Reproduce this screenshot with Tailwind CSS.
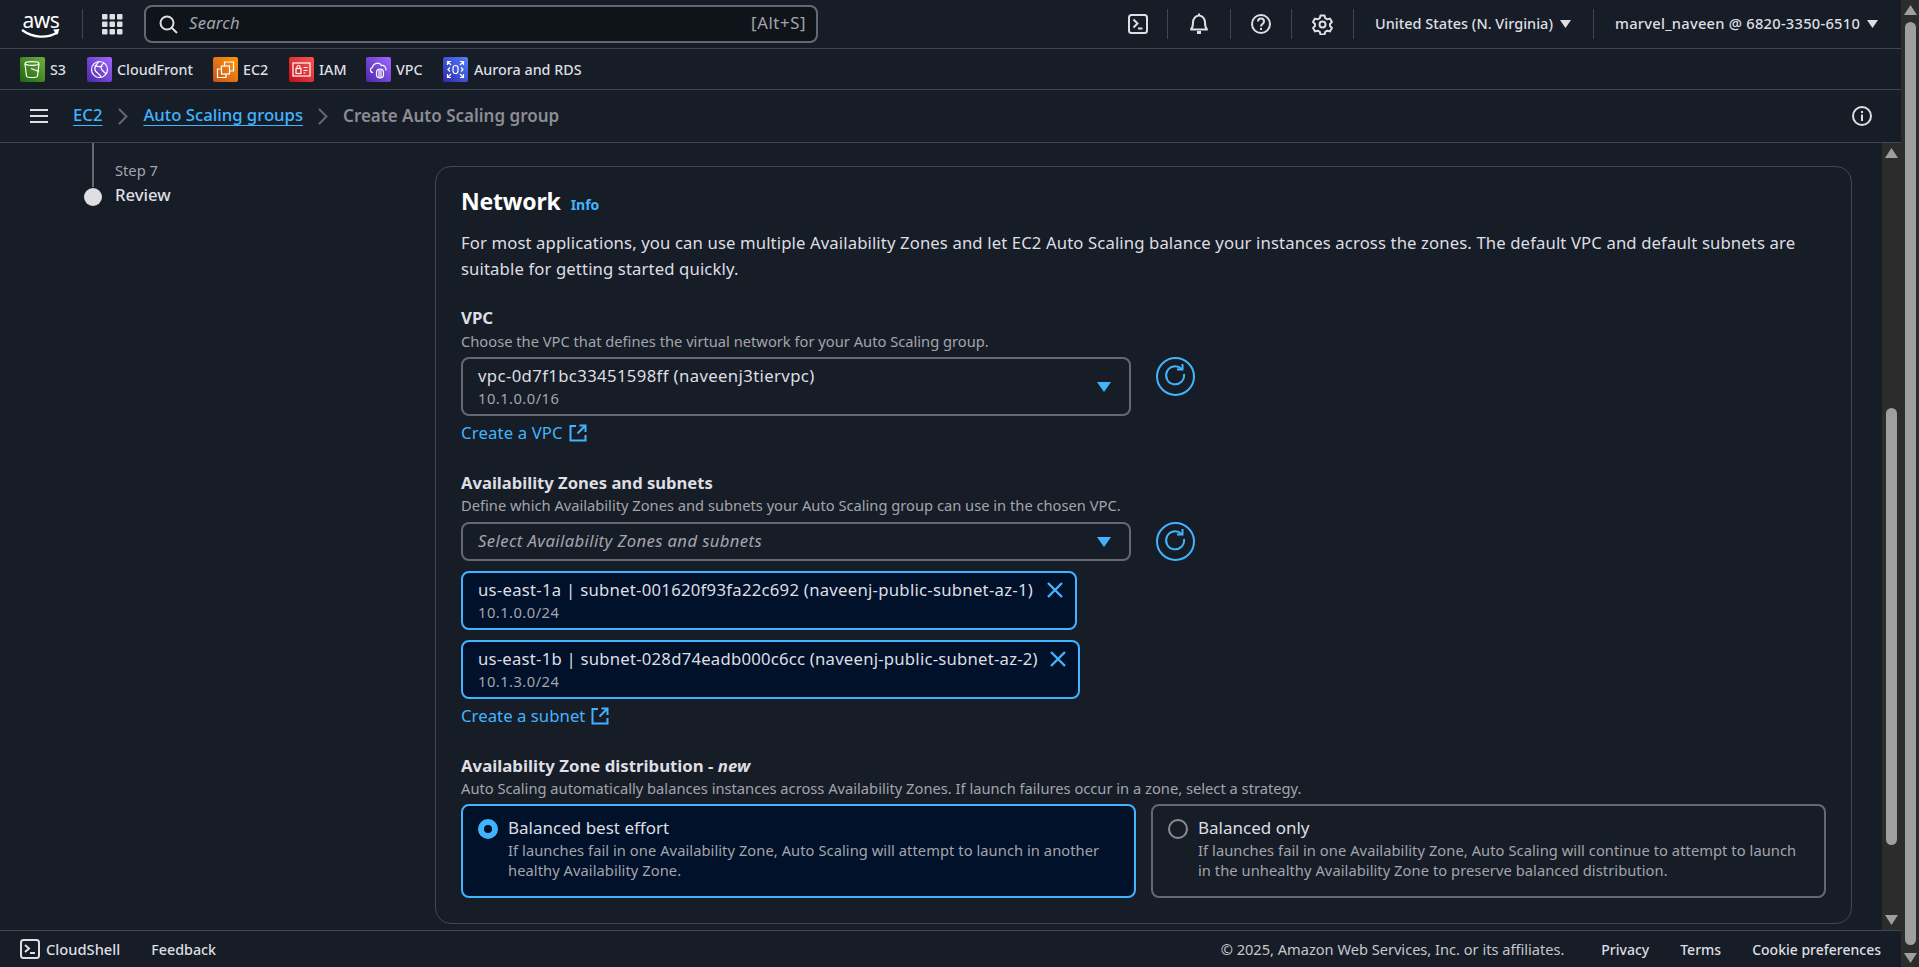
<!DOCTYPE html>
<html lang="en">
<head>
<meta charset="utf-8">
<title>Create Auto Scaling group</title>
<script src="https://cdn.jsdelivr.net/npm/@tailwindcss/browser@4"></script>
</head>
<body class="m-0 bg-[#161d26]">
<div class="flex h-[967px] w-[1919px] overflow-hidden bg-[#161d26] font-['Noto_Sans',sans-serif] text-[#dedee3]">
  <div class="flex w-[1901px] flex-col">
    <!-- Top nav -->
    <header class="flex h-[49px] shrink-0 items-center border-b border-[#424650]">
      <div class="relative ml-[21px] h-[30px] w-[40px] shrink-0">
        <span class="block text-center text-[21px] leading-[22px] tracking-[-0.5px] text-white">aws</span>
        <svg class="absolute left-0 top-[19px]" width="40" height="12" viewBox="0 0 40 12" fill="none"><path d="M1 2c11 8 25 9 36 2" stroke="#fff" stroke-width="2.2"/><path d="M32 1.5l6.500-.5-2.500 6z" fill="#fff"/></svg>
      </div>
      <div class="ml-[21px] h-[30px] w-px shrink-0 bg-[#424650]"></div>
      <svg class="ml-[19px] shrink-0" width="21" height="21" viewBox="0 0 21 21" fill="#dedee3"><rect x="0" y="0" width="5.500" height="5.500" rx="1"/><rect x="7.500" y="0" width="5.500" height="5.500" rx="1"/><rect x="15" y="0" width="5.500" height="5.500" rx="1"/><rect x="0" y="7.500" width="5.500" height="5.500" rx="1"/><rect x="7.500" y="7.500" width="5.500" height="5.500" rx="1"/><rect x="15" y="7.500" width="5.500" height="5.500" rx="1"/><rect x="0" y="15" width="5.500" height="5.500" rx="1"/><rect x="7.500" y="15" width="5.500" height="5.500" rx="1"/><rect x="15" y="15" width="5.500" height="5.500" rx="1"/></svg>
      <div class="ml-[21px] flex h-[38px] w-[674px] shrink-0 items-center rounded-[8px] border-2 border-[#656871] bg-[#0f141a] pl-[13px] pr-[10px]">
        <svg width="19" height="19" viewBox="0 0 19 19" fill="none" stroke="#dedee3" stroke-width="2"><circle cx="8" cy="8" r="6.500"/><path d="M12.500 12.500l5.500 5.500"/></svg>
        <span class="mb-[2px] ml-[11px] text-[16.7px] italic tracking-[0.2px] text-[#a4a4ad]">Search</span>
        <span class="mb-[2px] ml-auto text-[16.7px] tracking-[0.6px] text-[#a4a4ad]">[Alt+S]</span>
      </div>
      <div class="ml-auto flex h-[30px] items-center">
        <div class="flex h-full w-[61px] items-center justify-center border-r border-[#424650] pl-[2px]">
          <svg width="20" height="20" viewBox="0 0 20 20" fill="none" stroke="#dedee3" stroke-width="2"><rect x="1" y="1" width="18" height="18" rx="2.500"/><path d="M5.500 5.500l4 4-4 4M10 14.500h4.500"/></svg>
        </div>
        <div class="flex h-full w-[63px] items-center justify-center border-r border-[#424650]">
          <svg width="20" height="22" viewBox="0 0 20 22" fill="none" stroke="#dedee3" stroke-width="2" stroke-linejoin="round"><path d="M2 16.500c2-2 2-3.500 2-7 0-3.500 2.500-7 6-7s6 3.500 6 7c0 3.500 0 5 2 7z"/><path d="M8 19.500h4" stroke-width="3"/><path d="M10 .5v2"/></svg>
        </div>
        <div class="flex h-full w-[61px] items-center justify-center border-r border-[#424650]">
          <svg width="20" height="20" viewBox="0 0 20 20" fill="none" stroke="#dedee3" stroke-width="2"><circle cx="10" cy="10" r="9"/><path d="M7 7.500c0-4 6-4 6 0 0 2.500-3 2.500-3 5"/><path d="M10 14v2"/></svg>
        </div>
        <div class="flex h-full w-[62px] items-center justify-center border-r border-[#424650]">
          <svg width="21" height="21" viewBox="0 0 21 21" fill="none" stroke="#dedee3" stroke-width="2" stroke-linejoin="round"><path d="M8.500 1.500h4l.7 2.600 2.100 1.200 2.600-.7 2 3.500-1.900 1.900v2l1.900 1.900-2 3.500-2.600-.7-2.100 1.200-.7 2.600h-4l-.7-2.600-2.100-1.200-2.600.7-2-3.500 1.900-1.900v-2L1 8.100l2-3.500 2.600.7 2.200-1.200z"/><circle cx="10.500" cy="10.500" r="3"/></svg>
        </div>
        <div class="flex h-full w-[240px] items-center border-r border-[#424650] pl-[21px] text-[14.5px] font-medium">
          <span class="mb-px">United States (N. Virginia)</span>
          <svg class="ml-[7px]" width="11" height="8" viewBox="0 0 11 8" fill="#dedee3"><path d="M0 0h11L5.500 8z"/></svg>
        </div>
        <div class="flex h-full w-[307px] items-center pl-[21px] text-[14.7px] font-medium">
          <span class="mb-px tracking-[0.25px]">marvel_naveen @ 6820-3350-6510</span>
          <svg class="ml-[7px]" width="11" height="8" viewBox="0 0 11 8" fill="#dedee3"><path d="M0 0h11L5.500 8z"/></svg>
        </div>
      </div>
    </header>

    <!-- Favorites -->
    <nav class="flex h-[41px] shrink-0 items-center border-b border-[#424650] pl-[20px] text-[14.3px] font-medium">
      <div class="flex w-[67px] items-center gap-[5px]">
        <span class="flex h-[25px] w-[25px] items-center justify-center rounded-[2px] bg-gradient-to-tr from-[#1b660f] to-[#6cae3e]">
          <svg width="19" height="19" viewBox="0 0 19 19" fill="none" stroke="#fff" stroke-width="1.200"><ellipse cx="9" cy="3.500" rx="7" ry="1.800"/><path d="M2 4l1.500 12c.3 2 10.700 2 11 0L16 4"/><path d="M8 8.500l8 3"/></svg>
        </span><span class="mt-px">S3</span>
      </div>
      <div class="flex w-[126px] items-center gap-[5px]">
        <span class="flex h-[25px] w-[25px] items-center justify-center rounded-[2px] bg-gradient-to-tr from-[#4d27a8] to-[#a166ff]">
          <svg width="19" height="19" viewBox="0 0 19 19" fill="none" stroke="#fff" stroke-width="1.200"><circle cx="9.500" cy="9.500" r="8"/><path d="M9 1.500C6 5 4 7 5 10s4 3 6 7M14 3c-3 2-4 4-2 7l4 4M4.500 6c3 0 5 1 8 .5"/></svg>
        </span><span class="mt-px">CloudFront</span>
      </div>
      <div class="flex w-[76px] items-center gap-[5px]">
        <span class="flex h-[25px] w-[25px] items-center justify-center rounded-[2px] bg-gradient-to-tr from-[#c8511b] to-[#ff9900]">
          <svg width="19" height="19" viewBox="0 0 19 19" fill="none" stroke="#fff" stroke-width="1.200"><rect x="5.500" y="6" width="8" height="8"/><path d="M8.500 6V2h9v9h-4M5.500 9H1.500v8.500H10V14"/></svg>
        </span><span class="mt-px">EC2</span>
      </div>
      <div class="flex w-[77px] items-center gap-[5px]">
        <span class="flex h-[25px] w-[25px] items-center justify-center rounded-[2px] bg-gradient-to-tr from-[#bd0816] to-[#ff5252]">
          <svg width="19" height="19" viewBox="0 0 19 19" fill="none" stroke="#fff" stroke-width="1.200"><rect x="1" y="3" width="17" height="13"/><rect x="4" y="8.500" width="5" height="5"/><path d="M5 8.500V7c0-2 3-2 3 0v1.500M11.500 7.500h4M11.500 10.500h4M11.500 13h2"/></svg>
        </span><span class="mt-px">IAM</span>
      </div>
      <div class="flex w-[77px] items-center gap-[5px]">
        <span class="flex h-[25px] w-[25px] items-center justify-center rounded-[2px] bg-gradient-to-tr from-[#4d27a8] to-[#a166ff]">
          <svg width="19" height="19" viewBox="0 0 19 19" fill="none" stroke="#fff" stroke-width="1.200"><path d="M4 12.500C1 12.500.5 8 3.500 7.500 4 3 10.500 1.500 12.500 5.500c2.500-.5 5 2 4.500 5"/><rect x="7.500" y="9" width="7" height="9" rx="3.500"/><path d="M10 9v9M12 9v9"/></svg>
        </span><span class="mt-px">VPC</span>
      </div>
      <div class="flex items-center gap-[6px]">
        <span class="flex h-[25px] w-[25px] items-center justify-center rounded-[2px] bg-gradient-to-tr from-[#2e27ad] to-[#527fff]">
          <svg width="19" height="19" viewBox="0 0 19 19" fill="none" stroke="#fff" stroke-width="1.200"><rect x="7" y="5.500" width="5" height="8" rx="2.500"/><path d="M1.500 5V1.500H5M14 1.500h3.500V5M1.500 14v3.500H5M14 17.500h3.500V14M2 2l3 3M17 2l-3 3M2 17l3-3M17 17l-3-3M4 7.500L2 9.500l2 2M15 7.500l2 2-2 2"/></svg>
        </span><span class="mt-px">Aurora and RDS</span>
      </div>
    </nav>

    <!-- Breadcrumb -->
    <div class="flex h-[53px] shrink-0 items-center border-b border-[#424650] pl-[30px] pr-[29px] text-[16.7px] font-medium">
      <svg width="18" height="16" viewBox="0 0 18 16" stroke="#dedee3" stroke-width="2.200"><path d="M0 2h18M0 8h18M0 14h18"/></svg>
      <a class="mb-[2px] ml-[25px] text-[#42b4ff] underline underline-offset-[4px]">EC2</a>
      <svg class="ml-[16px]" width="10" height="17" viewBox="0 0 10 17" fill="none" stroke="#656871" stroke-width="2"><path d="M1 1l7.500 7.500L1 16"/></svg>
      <a class="mb-[2px] ml-[15px] text-[#42b4ff] underline underline-offset-[4px]">Auto Scaling groups</a>
      <svg class="ml-[15px]" width="10" height="17" viewBox="0 0 10 17" fill="none" stroke="#656871" stroke-width="2"><path d="M1 1l7.500 7.500L1 16"/></svg>
      <span class="mb-px ml-[15px] text-[17px] font-semibold text-[#8c8c94]">Create Auto Scaling group</span>
      <svg class="ml-auto" width="20" height="20" viewBox="0 0 20 20" fill="none" stroke="#dedee3" stroke-width="2"><circle cx="10" cy="10" r="9"/><path d="M10 8.500V15M10 5v2"/></svg>
    </div>

    <!-- Content + inner scrollbar -->
    <div class="flex min-h-0 flex-1">
      <main class="flex min-w-0 flex-1">
        <!-- Steps -->
        <aside class="w-[435px] shrink-0 pl-[83px]">
          <div class="flex">
            <div class="flex w-[19px] flex-col items-center">
              <div class="h-[44px] w-[2px] bg-[#656871]"></div>
              <div class="mt-px h-[18px] w-[18px] rounded-full bg-[#dedee3]"></div>
            </div>
            <div class="ml-[13px] pt-[18px]">
              <div class="pb-[2px] text-[14.7px] leading-[18px] text-[#a4a4ad]">Step 7</div>
              <div class="mt-[2px] text-[16.7px] font-medium leading-[24px] text-[#dedee3]">Review</div>
            </div>
          </div>
        </aside>

        <!-- Card -->
        <section class="mt-[23px] h-[758px] w-[1417px] shrink-0 rounded-[16px] border border-[#424650] px-[25px] pt-[19px]">
          <div class="flex h-[30px] items-baseline">
            <h2 class="text-[23px] font-bold leading-[30px] tracking-[-0.2px] text-white">Network</h2>
            <a class="ml-[10px] text-[14px] font-bold text-[#42b4ff]">Info</a>
          </div>
          <p class="mt-[14px] text-[16.7px] leading-[26px] tracking-[0.12px] text-[#dedee3]">For most applications, you can use multiple Availability Zones and let EC2 Auto Scaling balance your instances across the zones. The default VPC and default subnets are suitable for getting started quickly.</p>

          <div class="mt-[25px] text-[16.8px] font-bold leading-[22px]">VPC</div>
          <div class="mt-[3px] pb-[2px] text-[14.7px] leading-[18px] text-[#a4a4ad]">Choose the VPC that defines the virtual network for your Auto Scaling group.</div>
          <div class="mt-[5px] flex items-start">
            <div class="relative h-[59px] w-[670px] rounded-[8px] border-2 border-[#656871] px-[15px] pt-[4px]">
              <div class="text-[16.7px] leading-[26px] tracking-[0.38px]">vpc-0d7f1bc33451598ff (naveenj3tiervpc)</div>
              <div class="pb-[2px] text-[14.7px] leading-[18px] tracking-[0.48px] text-[#a4a4ad]">10.1.0.0/16</div>
              <svg class="absolute right-[18px] top-[23px]" width="14" height="10" viewBox="0 0 14 10" fill="#42b4ff"><path d="M0 0h14L7 10z"/></svg>
            </div>
            <svg class="ml-[25px]" width="39" height="39" viewBox="0 0 39 39" fill="none" stroke="#42b4ff" stroke-width="2"><circle cx="19.500" cy="19.500" r="18.500"/><path d="M28 17a9 9 0 1 1-2.500-5"/><path d="M26.500 7v5.500h-5.500"/></svg>
          </div>
          <a class="mt-[4px] flex h-[26px] items-center text-[16.7px] tracking-[0.15px] text-[#42b4ff]">Create a VPC
            <svg class="ml-[6px]" width="18" height="18" viewBox="0 0 18 18" fill="none" stroke="#42b4ff" stroke-width="2"><path d="M7 2H1.500v14.500h15V11"/><path d="M10.500 1.500h6V8M16 2L8.500 9.500"/></svg>
          </a>

          <div class="mt-[26px] text-[16.6px] font-bold leading-[22px]">Availability Zones and subnets</div>
          <div class="mt-[2px] pb-[2px] text-[14.7px] leading-[18px] text-[#a4a4ad]">Define which Availability Zones and subnets your Auto Scaling group can use in the chosen VPC.</div>
          <div class="mt-[6px] flex items-start">
            <div class="relative flex h-[39px] w-[670px] items-center rounded-[8px] border-2 border-[#656871] px-[15px] pb-[2px]">
              <span class="text-[16.7px] italic tracking-[0.38px] text-[#a4a4ad]">Select Availability Zones and subnets</span>
              <svg class="absolute right-[18px] top-[13px]" width="14" height="10" viewBox="0 0 14 10" fill="#42b4ff"><path d="M0 0h14L7 10z"/></svg>
            </div>
            <svg class="ml-[25px]" width="39" height="39" viewBox="0 0 39 39" fill="none" stroke="#42b4ff" stroke-width="2"><circle cx="19.500" cy="19.500" r="18.500"/><path d="M28 17a9 9 0 1 1-2.500-5"/><path d="M26.500 7v5.500h-5.500"/></svg>
          </div>

          <div class="mt-[10px] flex h-[59px] w-[616px] items-start rounded-[8px] border-2 border-[#42b4ff] bg-[#001129] pl-[15px] pt-[4px]">
            <div>
              <div class="whitespace-nowrap text-[16.7px] leading-[26px] tracking-[0.27px]">us-east-1a | subnet-001620f93fa22c692 (naveenj-public-subnet-az-1)</div>
              <div class="pb-[2px] text-[14.7px] leading-[18px] tracking-[0.48px] text-[#a4a4ad]">10.1.0.0/24</div>
            </div>
            <svg class="ml-auto mr-[12px] mt-[5px]" width="16" height="16" viewBox="0 0 16 16" stroke="#42b4ff" stroke-width="2.400"><path d="M1 1l14 14M15 1L1 15"/></svg>
          </div>
          <div class="mt-[10px] flex h-[59px] w-[619px] items-start rounded-[8px] border-2 border-[#42b4ff] bg-[#001129] pl-[15px] pt-[4px]">
            <div>
              <div class="whitespace-nowrap text-[16.7px] leading-[26px] tracking-[0.23px]">us-east-1b | subnet-028d74eadb000c6cc (naveenj-public-subnet-az-2)</div>
              <div class="pb-[2px] text-[14.7px] leading-[18px] tracking-[0.48px] text-[#a4a4ad]">10.1.3.0/24</div>
            </div>
            <svg class="ml-auto mr-[12px] mt-[5px]" width="16" height="16" viewBox="0 0 16 16" stroke="#42b4ff" stroke-width="2.400"><path d="M1 1l14 14M15 1L1 15"/></svg>
          </div>
          <a class="mt-[4px] flex h-[26px] items-center text-[16.7px] tracking-[0.05px] text-[#42b4ff]">Create a subnet
            <svg class="ml-[6px]" width="18" height="18" viewBox="0 0 18 18" fill="none" stroke="#42b4ff" stroke-width="2"><path d="M7 2H1.500v14.500h15V11"/><path d="M10.500 1.500h6V8M16 2L8.500 9.500"/></svg>
          </a>

          <div class="mt-[26px] text-[16.8px] font-bold leading-[22px]">Availability Zone distribution - <em>new</em></div>
          <div class="mt-[2px] pb-[2px] text-[14.7px] leading-[18px] text-[#a4a4ad]">Auto Scaling automatically balances instances across Availability Zones. If launch failures occur in a zone, select a strategy.</div>
          <div class="mt-[5px] flex gap-[15px]">
            <div class="flex h-[94px] w-[675px] rounded-[8px] border-2 border-[#42b4ff] bg-[#001129] pl-[15px] pt-[9px]">
              <div class="mt-[4px] flex h-[20px] w-[20px] shrink-0 items-center justify-center rounded-full bg-[#42b4ff]"><div class="h-[8px] w-[8px] rounded-full bg-[#001129]"></div></div>
              <div class="ml-[10px]">
                <div class="text-[17px] leading-[26px]">Balanced best effort</div>
                <div class="-mt-px text-[14.7px] leading-[20px] tracking-[0.06px] text-[#a4a4ad]">If launches fail in one Availability Zone, Auto Scaling will attempt to launch in another<br>healthy Availability Zone.</div>
              </div>
            </div>
            <div class="flex h-[94px] w-[675px] rounded-[8px] border-2 border-[#656871] pl-[15px] pt-[9px]">
              <div class="mt-[4px] h-[20px] w-[20px] shrink-0 rounded-full border-2 border-[#8c8c94]"></div>
              <div class="ml-[10px]">
                <div class="text-[17px] leading-[26px]">Balanced only</div>
                <div class="-mt-px text-[14.7px] leading-[20px] tracking-[0.06px] text-[#a4a4ad]">If launches fail in one Availability Zone, Auto Scaling will continue to attempt to launch<br>in the unhealthy Availability Zone to preserve balanced distribution.</div>
              </div>
            </div>
          </div>
        </section>
      </main>

      <!-- Inner scrollbar -->
      <div class="flex w-[19px] shrink-0 flex-col items-center bg-[#2c2c2c]">
        <svg class="mt-[5px]" width="13" height="10" viewBox="0 0 13 10" fill="#9f9f9f"><path d="M6.500 0L13 10H0z"/></svg>
        <div class="mt-[250px] h-[437px] w-[11px] rounded-full bg-[#9f9f9f]"></div>
        <svg class="mt-[70px]" width="13" height="10" viewBox="0 0 13 10" fill="#9f9f9f"><path d="M0 0h13L6.500 10z"/></svg>
      </div>
    </div>

    <!-- Footer -->
    <footer class="flex h-[37px] shrink-0 items-center border-t border-[#424650] pl-[20px] pr-[20px] text-[14px] font-medium">
      <svg width="20" height="20" viewBox="0 0 20 20" fill="none" stroke="#dedee3" stroke-width="2"><rect x="1" y="1" width="18" height="18" rx="2.500"/><path d="M5 6l4 3.500L5 13M10 14h5"/></svg>
      <span class="ml-[6px] mt-px text-[14.7px]">CloudShell</span>
      <span class="ml-[31px] mt-px text-[14.3px]">Feedback</span>
      <span class="ml-auto mt-px text-[14.6px] font-normal text-[#c6c6cd]">© 2025, Amazon Web Services, Inc. or its affiliates.</span>
      <span class="ml-[37px]">Privacy</span>
      <span class="ml-[31px]">Terms</span>
      <span class="ml-[31px]">Cookie preferences</span>
    </footer>
  </div>

  <!-- Page scrollbar -->
  <div class="flex w-[18px] shrink-0 flex-col items-center bg-[#2c2c2c]">
    <svg class="mt-[5px]" width="13" height="10" viewBox="0 0 13 10" fill="#9f9f9f"><path d="M6.500 0L13 10H0z"/></svg>
    <div class="mt-[7px] h-[923px] w-[11px] rounded-full bg-[#9f9f9f]"></div>
    <svg class="mt-[8px]" width="13" height="10" viewBox="0 0 13 10" fill="#9f9f9f"><path d="M0 0h13L6.500 10z"/></svg>
  </div>
</div>
</body>
</html>
